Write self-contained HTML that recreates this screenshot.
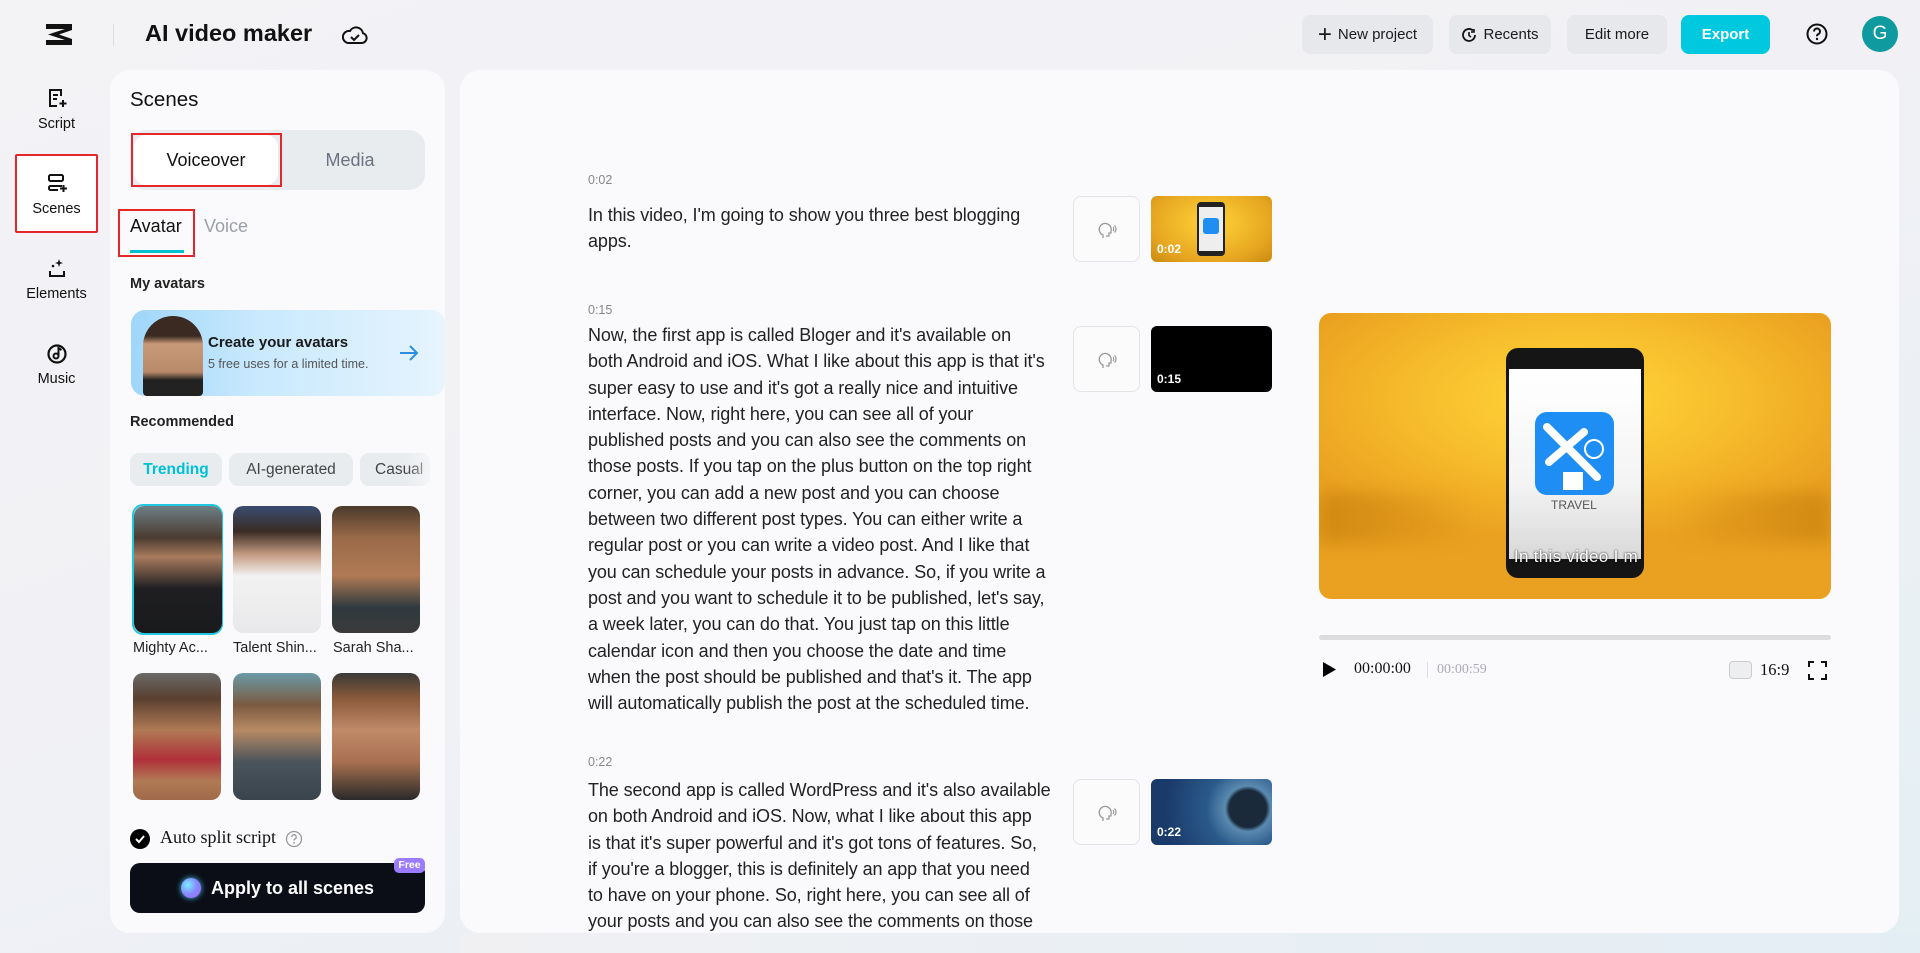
<!DOCTYPE html>
<html><head><meta charset="utf-8"><style>
*{box-sizing:border-box;margin:0;padding:0}
body{width:1920px;height:953px;overflow:hidden;font-family:"Liberation Sans",sans-serif;color:#111;background:linear-gradient(160deg,#f3f3f6 0%,#f1f1f5 45%,#e4eff4 100%);position:relative}
.abs{position:absolute}
.btn{position:absolute;top:15px;height:39px;border-radius:8px;background:#e6e8ec;font-size:15px;display:flex;align-items:center;justify-content:center;gap:6px;color:#1a1a1a}
.nav{position:absolute;left:15px;width:83px;text-align:center;font-size:14.5px;color:#111}
.nav svg{display:block;margin:0 auto 7px}
.panel{position:absolute;background:#fafafc;border-radius:20px}
.chip{position:absolute;top:453px;height:33px;border-radius:9px;background:#e9ecef;font-size:15.5px;display:flex;align-items:center;justify-content:center;color:#444}
.av{position:absolute;width:88px;height:127px;border-radius:10px}
.nm{position:absolute;top:640px;font-size:14.5px;color:#222}
.ts{position:absolute;left:588px;font-size:12.5px;color:#888}
.tx{position:absolute;left:588px;font-size:18px;line-height:26.3px;color:#222;white-space:nowrap;letter-spacing:-0.1px}
.vb{position:absolute;left:1073px;width:67px;height:66px;border:1px solid #e2e4e8;border-radius:8px;background:#fbfbfc}
.vb svg{position:absolute;left:24px;top:24px}
.th{position:absolute;left:1151px;width:121px;height:66px;border-radius:6px;overflow:hidden}
.th span{position:absolute;left:6px;bottom:6px;color:#fff;font-size:12px;font-weight:bold}
</style></head><body>

<svg class="abs" style="left:44px;top:22px" width="30" height="25" viewBox="0 0 30 25"><path d="M2 2h26v6L15 12.5 28 17v6H2v-5h19L4 12.5 21 7H2z" fill="#111"/></svg>
<div class="abs" style="left:113px;top:24px;width:1px;height:22px;background:#ddd"></div>
<div class="abs" style="left:145px;top:20px;font-size:23.5px;font-weight:bold;color:#111">AI video maker</div>
<svg class="abs" style="left:342px;top:24px" width="26" height="22" viewBox="0 0 26 22"><path d="M6 19h14a5 5 0 0 0 1-9.8A7 7 0 0 0 8 7 6 6 0 0 0 6 19z" fill="none" stroke="#111" stroke-width="2"/><path d="M9 13l3 3 5-5" fill="none" stroke="#111" stroke-width="2"/></svg>

<div class="btn" style="left:1302px;width:131px"><span style="font-size:24px;font-weight:300;line-height:1">+</span>New project</div>
<div class="btn" style="left:1449px;width:102px"><svg width="16" height="16" viewBox="0 0 16 16"><path d="M14 8a6 6 0 1 1-2-4.5" fill="none" stroke="#111" stroke-width="1.8"/><path d="M8 5v3.5l2 1.5" fill="none" stroke="#111" stroke-width="1.6"/><path d="M13 2v3h-3" fill="none" stroke="#111" stroke-width="1.6"/></svg>Recents</div>
<div class="btn" style="left:1567px;width:100px">Edit more</div>
<div class="btn" style="left:1681px;width:89px;background:#00c8de;color:#fff;font-weight:bold">Export</div>
<svg class="abs" style="left:1806px;top:23px" width="22" height="22" viewBox="0 0 22 22"><circle cx="11" cy="11" r="9.5" fill="none" stroke="#111" stroke-width="2"/><path d="M8 8.5a3 3 0 1 1 4 2.8c-.8.4-1 .9-1 1.9" fill="none" stroke="#111" stroke-width="2"/><circle cx="11" cy="16" r="1.2" fill="#111"/></svg>
<div class="abs" style="left:1862px;top:16px;width:36px;height:36px;border-radius:50%;background:#0f9aa0;color:#fff;font-size:19px;display:flex;align-items:center;justify-content:center">G</div>

<div class="nav" style="top:87px"><svg width="22" height="22" viewBox="0 0 22 22"><path d="M15 9V3H4v16h7" fill="none" stroke="#111" stroke-width="2"/><path d="M7 8h5M7 12h4" stroke="#111" stroke-width="2"/><path d="M17 13v7M13.5 16.5h7" stroke="#111" stroke-width="2"/></svg>Script</div>
<div class="abs" style="left:15px;top:154px;width:83px;height:79px;border:2px solid #e5262b;background:#fff;border-radius:2px"></div>
<div class="nav" style="top:172px"><svg width="22" height="22" viewBox="0 0 22 22"><rect x="3" y="3" width="14" height="6" rx="1.5" fill="none" stroke="#111" stroke-width="2"/><path d="M16 14H4.5A1.5 1.5 0 0 0 3 15.5v1A1.5 1.5 0 0 0 4.5 18H12" fill="none" stroke="#111" stroke-width="2"/><path d="M17.5 13v7M14 16.5h7" stroke="#111" stroke-width="2"/></svg>Scenes</div>
<div class="nav" style="top:257px"><svg width="22" height="22" viewBox="0 0 22 22"><path d="M4 14v5h14v-5" fill="none" stroke="#111" stroke-width="2"/><path d="M13 2l1 3 3 1-3 1-1 3-1-3-3-1 3-1z" fill="#111"/><circle cx="7" cy="9" r="1.3" fill="#111"/></svg>Elements</div>
<div class="nav" style="top:342px"><svg width="22" height="22" viewBox="0 0 22 22"><circle cx="11" cy="12" r="8.5" fill="none" stroke="#111" stroke-width="2.2"/><circle cx="10" cy="14" r="2.5" fill="none" stroke="#111" stroke-width="2"/><path d="M12.5 14V6l3 2" fill="none" stroke="#111" stroke-width="2"/></svg>Music</div>

<div class="panel" style="left:110px;top:70px;width:335px;height:863px"></div>
<div class="abs" style="left:130px;top:88px;font-size:20.5px;color:#111">Scenes</div>
<div class="abs" style="left:130px;top:130px;width:295px;height:60px;border-radius:16px;background:#e9ecef"></div>
<div class="abs" style="left:134px;top:135px;width:144px;height:50px;border-radius:12px;background:#fff;font-size:18px;display:flex;align-items:center;justify-content:center;color:#111">Voiceover</div>
<div class="abs" style="left:131px;top:133px;width:151px;height:54px;border:2px solid #e5262b"></div>
<div class="abs" style="left:278px;top:135px;width:144px;height:50px;font-size:18px;display:flex;align-items:center;justify-content:center;color:#6b7280">Media</div>
<div class="abs" style="left:130px;top:216px;font-size:18px;color:#111">Avatar</div>
<div class="abs" style="left:204px;top:216px;font-size:18px;color:#9aa0a6">Voice</div>
<div class="abs" style="left:130px;top:250px;width:54px;height:3px;background:#00c0d0"></div>
<div class="abs" style="left:118px;top:209px;width:77px;height:48px;border:2px solid #e5262b"></div>
<div class="abs" style="left:130px;top:276px;font-size:14.5px;font-weight:bold;color:#222">My avatars</div>

<div class="abs" style="left:131px;top:310px;width:314px;height:86px;border-radius:14px;background:linear-gradient(90deg,#9fd6fa 0%,#c9e9fd 40%,#e6f4fd 100%);overflow:hidden">
  <div class="abs" style="left:12px;top:6px;width:60px;height:80px;border-radius:30px 30px 4px 4px;background:linear-gradient(180deg,#3a2a22 0%,#3a2a22 25%,#c99a7a 35%,#b98a6a 70%,#222 80%)"></div>
  <div class="abs" style="left:77px;top:24px;font-size:15px;font-weight:bold;color:#1a1a1a">Create your avatars</div>
  <div class="abs" style="left:77px;top:47px;font-size:12.5px;color:#555">5 free uses for a limited time.</div>
  <svg class="abs" style="left:267px;top:33px" width="22" height="20" viewBox="0 0 22 20"><path d="M2 10h17M12 3l7 7-7 7" fill="none" stroke="#2a8fe0" stroke-width="2"/></svg>
</div>
<div class="abs" style="left:130px;top:414px;font-size:14.5px;font-weight:bold;color:#222">Recommended</div>
<div class="chip" style="left:130px;width:92px;color:#00c0d8;font-weight:bold">Trending</div>
<div class="chip" style="left:229px;width:124px">AI-generated</div>
<div class="chip" style="left:360px;width:70px;justify-content:flex-start;padding-left:15px;overflow:hidden">Casual</div>
<div class="abs" style="left:405px;top:450px;width:40px;height:40px;background:linear-gradient(90deg,rgba(250,250,252,0),#fafafc)"></div>

<div class="av" style="left:132px;top:504px;width:91px;height:131px;border:2px solid #1fc8e0;border-radius:11px"></div>
<div class="av" style="left:134px;top:506px;background:linear-gradient(180deg,#6d7f86 0%,#4b3b30 25%,#a87b5e 40%,#1f1f22 65%,#191a1c 100%)"></div>
<div class="av" style="left:233px;top:506px;background:linear-gradient(180deg,#3b4c70 0%,#3a2c25 20%,#c49a80 38%,#f2f2f2 55%,#e8e8ea 100%)"></div>
<div class="av" style="left:332px;top:506px;background:linear-gradient(180deg,#4a3a2c 0%,#9a6a48 25%,#b07a55 55%,#2f3a3e 80%,#3a3a3a 100%)"></div>
<div class="nm" style="left:133px">Mighty Ac...</div>
<div class="nm" style="left:233px">Talent Shin...</div>
<div class="nm" style="left:333px">Sarah Sha...</div>
<div class="av" style="left:133px;top:673px;background:linear-gradient(180deg,#6a6a68 0%,#5a4030 20%,#b07a55 45%,#b0303a 68%,#b07a55 85%,#a06a4a 100%)"></div>
<div class="av" style="left:233px;top:673px;background:linear-gradient(180deg,#6a9aa8 0%,#7a5a40 25%,#b88a65 45%,#4a545c 70%,#3a444c 100%)"></div>
<div class="av" style="left:332px;top:673px;background:linear-gradient(180deg,#3a3a38 0%,#8a5a3a 20%,#c08a68 45%,#a87050 70%,#2a2a2a 100%)"></div>

<div class="abs" style="left:130px;top:829px;width:20px;height:20px;border-radius:50%;background:#000"></div>
<svg class="abs" style="left:134px;top:833px" width="12" height="12" viewBox="0 0 12 12"><path d="M2 6l3 3 5-6" fill="none" stroke="#fff" stroke-width="2"/></svg>
<div class="abs" style="left:160px;top:827px;font-size:18px;font-family:'Liberation Serif',serif;color:#111">Auto split script</div>
<svg class="abs" style="left:285px;top:830px" width="18" height="18" viewBox="0 0 18 18"><circle cx="9" cy="9" r="7.5" fill="none" stroke="#999" stroke-width="1.3"/><path d="M6.8 7a2.2 2.2 0 1 1 3 2c-.6.3-.8.7-.8 1.5" fill="none" stroke="#999" stroke-width="1.3"/><circle cx="9" cy="12.8" r=".9" fill="#999"/></svg>
<div class="abs" style="left:130px;top:863px;width:295px;height:50px;border-radius:10px;background:#0b0e17;color:#fff;font-size:18px;font-weight:bold;display:flex;align-items:center;justify-content:center;gap:10px"><span style="width:20px;height:20px;border-radius:50%;background:radial-gradient(circle at 35% 35%,#7ef 0%,#88f 50%,#a6f 100%);box-shadow:0 0 6px #4cf"></span>Apply to all scenes</div>
<div class="abs" style="left:394px;top:858px;width:31px;height:15px;border-radius:5px;background:#9b7bff;color:#fff;font-size:10.5px;font-weight:bold;text-align:center;line-height:15px">Free</div>

<div class="panel" style="left:460px;top:70px;width:1439px;height:863px"></div>

<div class="ts" style="top:173px">0:02</div>
<div class="tx" style="top:202px">In this video, I'm going to show you three best blogging<br>apps.</div>
<div class="vb" style="top:196px"><svg width="20" height="20" viewBox="0 0 20 20"><path d="M5 17v-3a6 6 0 1 1 8-4v2h-2v3H8" fill="none" stroke="#999" stroke-width="1.3"/><path d="M15 6c1 1 1 3 0 4M16.5 4.5c2 2 2 5 0 7" fill="none" stroke="#999" stroke-width="1.2"/></svg></div>
<div class="th" style="top:196px;background:radial-gradient(ellipse at 50% 40%,#ffd53a,#e6a520 70%,#c88a10)"><div class="abs" style="left:46px;top:6px;width:28px;height:54px;background:#222;border-radius:4px"></div><div class="abs" style="left:48px;top:11px;width:24px;height:44px;background:#eee"></div><div class="abs" style="left:52px;top:22px;width:16px;height:16px;background:#1e8ef0;border-radius:3px"></div><span>0:02</span></div>

<div class="ts" style="top:303px">0:15</div>
<div class="tx" style="top:322px">Now, the first app is called Bloger and it's available on<br>both Android and iOS. What I like about this app is that it's<br>super easy to use and it's got a really nice and intuitive<br>interface. Now, right here, you can see all of your<br>published posts and you can also see the comments on<br>those posts. If you tap on the plus button on the top right<br>corner, you can add a new post and you can choose<br>between two different post types. You can either write a<br>regular post or you can write a video post. And I like that<br>you can schedule your posts in advance. So, if you write a<br>post and you want to schedule it to be published, let's say,<br>a week later, you can do that. You just tap on this little<br>calendar icon and then you choose the date and time<br>when the post should be published and that's it. The app<br>will automatically publish the post at the scheduled time.</div>
<div class="vb" style="top:326px"><svg width="20" height="20" viewBox="0 0 20 20"><path d="M5 17v-3a6 6 0 1 1 8-4v2h-2v3H8" fill="none" stroke="#999" stroke-width="1.3"/><path d="M15 6c1 1 1 3 0 4M16.5 4.5c2 2 2 5 0 7" fill="none" stroke="#999" stroke-width="1.2"/></svg></div>
<div class="th" style="top:326px;background:#000"><span>0:15</span></div>

<div class="ts" style="top:755px">0:22</div>
<div class="tx" style="top:777px">The second app is called WordPress and it's also available<br>on both Android and iOS. Now, what I like about this app<br>is that it's super powerful and it's got tons of features. So,<br>if you're a blogger, this is definitely an app that you need<br>to have on your phone. So, right here, you can see all of<br>your posts and you can also see the comments on those</div>
<div class="vb" style="top:779px"><svg width="20" height="20" viewBox="0 0 20 20"><path d="M5 17v-3a6 6 0 1 1 8-4v2h-2v3H8" fill="none" stroke="#999" stroke-width="1.3"/><path d="M15 6c1 1 1 3 0 4M16.5 4.5c2 2 2 5 0 7" fill="none" stroke="#999" stroke-width="1.2"/></svg></div>
<div class="th" style="top:779px;background:radial-gradient(circle at 80% 45%,#1a2a3a 0 18%,#5a8ab0 22%,#2a5a8a 40%,#1a3a6a 80%)"><span>0:22</span></div>
<div class="abs" style="left:460px;top:933px;width:1460px;height:20px;background:linear-gradient(90deg,#f0f0f3,#e3eef4)"></div>

<div class="abs" style="left:1319px;top:313px;width:512px;height:286px;border-radius:12px;overflow:hidden;background:radial-gradient(ellipse 60% 50% at 50% 30%,#ffd83a 0%,#f5b82a 60%,#eaa020 100%)">
  <div class="abs" style="left:0;top:180px;width:512px;height:50px;background:linear-gradient(90deg,rgba(180,110,0,.45),rgba(230,170,30,0) 30%,rgba(230,170,30,0) 70%,rgba(180,110,0,.45));filter:blur(8px)"></div>
  <div class="abs" style="left:187px;top:35px;width:138px;height:230px;border-radius:12px;background:#151515"></div>
  <div class="abs" style="left:190px;top:56px;width:132px;height:190px;background:linear-gradient(180deg,#fff 0%,#f4f4f4 60%,#d8d8d8 100%)"></div>
  <div class="abs" style="left:216px;top:99px;width:79px;height:83px;border-radius:12px;background:#1e8ef5"></div>
  <svg class="abs" style="left:220px;top:104px" width="70" height="75" viewBox="0 0 70 75"><path d="M8 10l50 50M10 45l35-30" stroke="#fff" stroke-width="8" stroke-linecap="round"/><rect x="24" y="55" width="20" height="18" fill="#fff"/><circle cx="55" cy="32" r="9" fill="none" stroke="#fff" stroke-width="2"/></svg>
  <div class="abs" style="left:232px;top:185px;font-size:12px;color:#555">TRAVEL</div>
  <div class="abs" style="left:186px;top:234px;width:142px;text-align:center;color:#fff;font-size:17px;white-space:nowrap;letter-spacing:.3px;text-shadow:0 0 2px #000">In this video  I m</div>
</div>
<div class="abs" style="left:1319px;top:635px;width:512px;height:5px;border-radius:3px;background:#dcdcde"></div>
<svg class="abs" style="left:1322px;top:661px" width="15" height="17" viewBox="0 0 15 17"><path d="M1 1l13 7.5L1 16z" fill="#000"/></svg>
<div class="abs" style="left:1354px;top:660px;font-size:16px;font-family:'Liberation Serif',serif;color:#111">00:00:00</div>
<div class="abs" style="left:1427px;top:662px;width:1px;height:16px;background:#ddd"></div>
<div class="abs" style="left:1437px;top:662px;font-size:14px;font-family:'Liberation Serif',serif;color:#aab">00:00:59</div>
<div class="abs" style="left:1729px;top:661px;width:23px;height:18px;border:1.5px solid #ccc;border-radius:4px;background:#eceef0"></div>
<div class="abs" style="left:1760px;top:660px;font-size:16.5px;font-family:'Liberation Serif',serif;color:#111">16:9</div>
<svg class="abs" style="left:1808px;top:661px" width="19" height="19" viewBox="0 0 19 19"><path d="M1 6V1h5M13 1h5v5M18 13v5h-5M6 18H1v-5" fill="none" stroke="#111" stroke-width="2"/></svg>
</body></html>
